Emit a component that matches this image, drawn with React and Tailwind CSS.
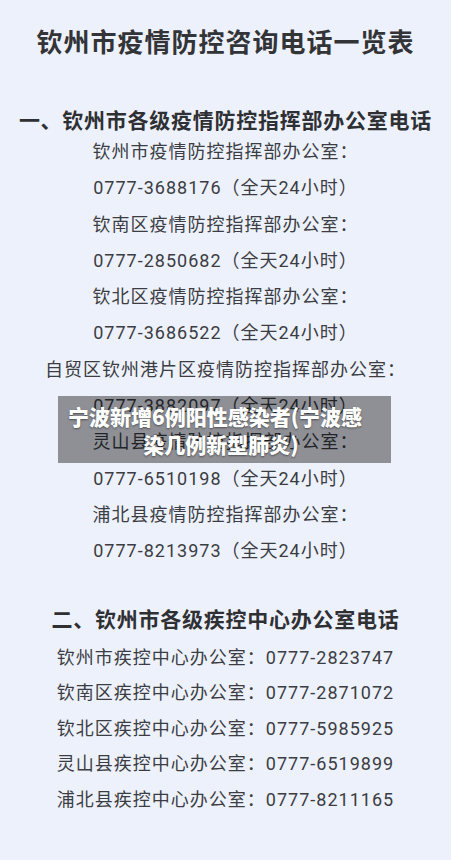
const cjk = "font-['Roboto','Noto_Sans_CJK_SC','Noto_Sans',sans-serif]";

const commandLines = [
  "钦州市疫情防控指挥部办公室：",
  "0777-3688176（全天24小时）",
  "钦南区疫情防控指挥部办公室：",
  "0777-2850682（全天24小时）",
  "钦北区疫情防控指挥部办公室：",
  "0777-3686522（全天24小时）",
  "自贸区钦州港片区疫情防控指挥部办公室：",
  "0777-3882097（全天24小时）",
  "灵山县疫情防控指挥部办公室：",
  "0777-6510198（全天24小时）",
  "浦北县疫情防控指挥部办公室：",
  "0777-8213973（全天24小时）",
];

const cdcLines = [
  "钦州市疾控中心办公室：0777-2823747",
  "钦南区疾控中心办公室：0777-2871072",
  "钦北区疾控中心办公室：0777-5985925",
  "灵山县疾控中心办公室：0777-6519899",
  "浦北县疾控中心办公室：0777-8211165",
];

export default function App() {
  return (
    <div className={`relative w-[451px] h-[860px] overflow-hidden bg-[#edf1fb] text-[#3b3d43] ${cjk}`}>
      <h1 className="mt-[23px] text-center text-[26px] leading-[36px] font-bold tracking-[1px] text-[#333438] font-['Noto_Sans_CJK_SC',sans-serif]">
        钦州市疫情防控咨询电话一览表
      </h1>

      <h2 className="mt-[47px] text-center text-[21px] leading-[26px] font-bold tracking-[0.75px] text-[#2f3034] font-['Noto_Sans_CJK_SC',sans-serif]">
        一、钦州市各级疫情防控指挥部办公室电话
      </h2>
      <div className="mt-[2px] flex flex-col items-center text-[18px] leading-[36.3px] tracking-[1px]">
        {commandLines.map((line) => (
          <p key={line}>{line}</p>
        ))}
      </div>

      <div className="mt-[35px] text-center text-[21px] leading-[26px] font-bold tracking-[0.75px] text-[#2f3034] font-['Noto_Sans_CJK_SC',sans-serif]">
        二、钦州市各级疾控中心办公室电话
      </div>
      <div className="mt-[9px] flex flex-col items-center text-[18px] leading-[35.5px] tracking-[1px]">
        {cdcLines.map((line) => (
          <p key={line}>{line}</p>
        ))}
      </div>

      <div className="absolute left-[58px] top-[396px] w-[333px] h-[67px] bg-black/40 flex flex-col items-center justify-center text-white text-[21px] leading-[28px] font-black font-['Noto_Sans_CJK_SC',sans-serif] [text-shadow:0_1px_2px_rgba(0,0,0,0.45)]">
        <span className="mr-[19px]">宁波新增6例阳性感染者(宁波感</span>
        <span className="mr-[7px]">染几例新型肺炎)</span>
      </div>
    </div>
  );
}
